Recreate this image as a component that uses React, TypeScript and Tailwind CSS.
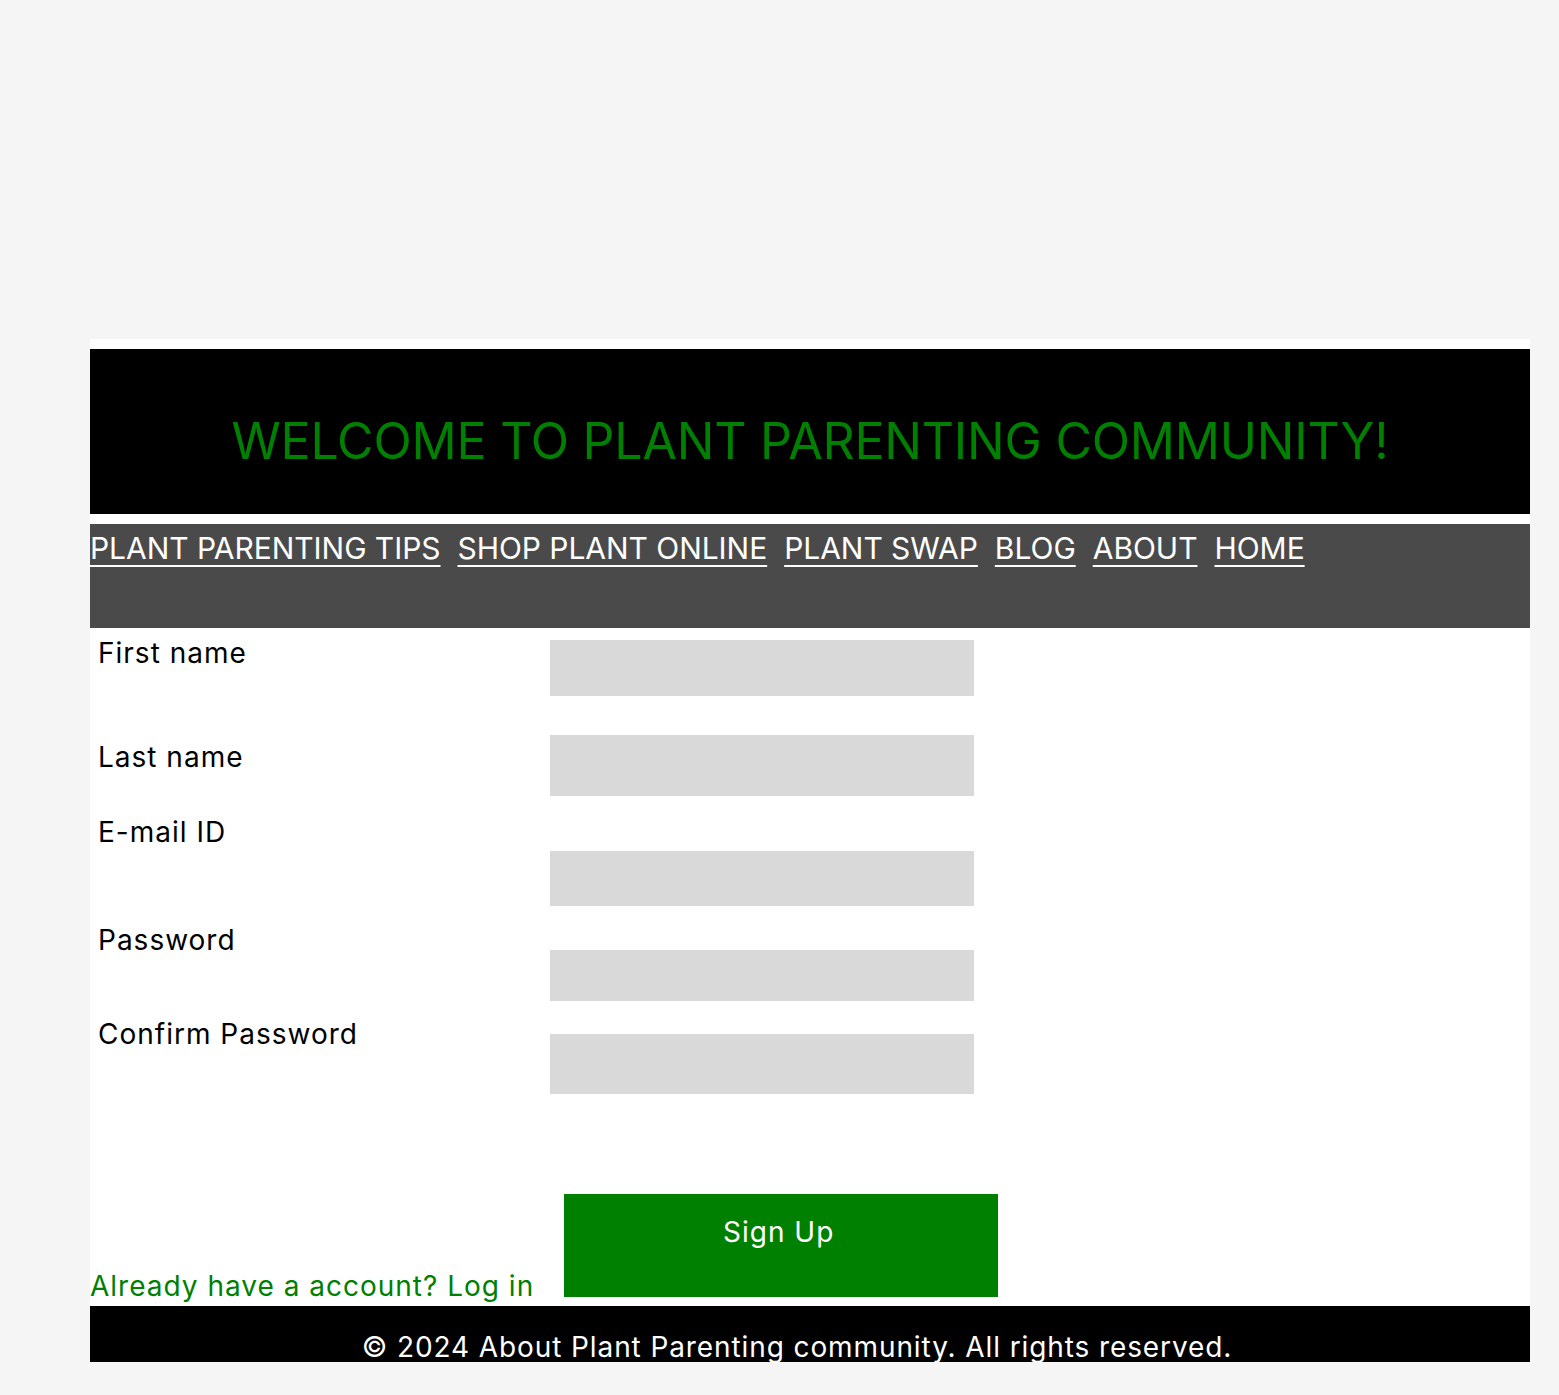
const navLinks = ['PLANT PARENTING TIPS', 'SHOP PLANT ONLINE', 'PLANT SWAP', 'BLOG', 'ABOUT', 'HOME'];

type Row = {
  label: string;
  type: string;
  rowClass: string;
  labelClass: string;
  inputClass: string;
};

const rows: Row[] = [
  { label: 'First name', type: 'text', rowClass: 'mt-[4px]', labelClass: 'mt-0', inputClass: 'mt-[8px] h-[56px]' },
  { label: 'Last name', type: 'text', rowClass: 'mt-[39px]', labelClass: 'mt-[1px]', inputClass: 'mt-0 h-[61px]' },
  { label: 'E-mail ID', type: 'email', rowClass: 'mt-[15px]', labelClass: 'mt-0', inputClass: 'mt-[40px] h-[55px]' },
  { label: 'Password', type: 'password', rowClass: 'mt-[13px]', labelClass: 'mt-0', inputClass: 'mt-[31px] h-[51px]' },
  { label: 'Confirm Password', type: 'password', rowClass: 'mt-[12px]', labelClass: 'mt-0', inputClass: 'mt-[21px] h-[60px]' },
];

function Header() {
  return (
    <header className="h-[165px] bg-black pt-[55px] text-center">
      <h1 className="text-[50px] font-normal leading-normal tracking-[-0.2px] text-[#008000]">
        WELCOME TO PLANT PARENTING COMMUNITY!
      </h1>
    </header>
  );
}

function Nav() {
  return (
    <nav className="mt-[10px] h-[104px] bg-[#4a4a4a] pt-[2px]">
      <ul className="flex gap-[17px]">
        {navLinks.map(link => (
          <li key={link}>
            <a
              href="#"
              className="text-[30px] leading-normal tracking-[-0.05px] text-white underline decoration-[1.5px] underline-offset-[6px]"
            >
              {link}
            </a>
          </li>
        ))}
      </ul>
    </nav>
  );
}

function SignUpForm() {
  return (
    <form onSubmit={e => e.preventDefault()}>
      {rows.map(row => (
        <div key={row.label} className={`flex items-start ${row.rowClass}`}>
          <label className={`w-[460px] pl-[8px] text-[28px] leading-normal tracking-[1px] text-black ${row.labelClass}`}>
            {row.label}
          </label>
          <input type={row.type} className={`w-[424px] bg-[#d9d9d9] outline-none ${row.inputClass}`} />
        </div>
      ))}

      <div className="mt-[100px] flex h-[112px] items-end">
        <a href="#" className="mb-[-1px] text-[28px] leading-normal tracking-[1px] text-[#008000]">
          Already have a account? Log in
        </a>
        <button
          type="submit"
          className="mb-[9px] ml-[30px] h-[103px] w-[434px] bg-[#008000] pt-[17px] pr-[5px] pb-[52px] text-[28px] leading-normal tracking-[1px] text-white"
        >
          Sign Up
        </button>
      </div>
    </form>
  );
}

export default function App() {
  return (
    <div className="min-h-[1395px] bg-[#f5f5f5] pt-[339px]" style={{ fontFamily: 'Inter, "Noto Sans", sans-serif' }}>
      <div className="ml-[90px] w-[1440px] bg-white pt-[10px]">
        <Header />
        <Nav />
        <SignUpForm />
        <footer className="h-[56px] overflow-hidden bg-black pt-[20px] pr-[26px] text-center text-[28px] leading-normal tracking-[0.9px] text-white">
          © 2024 About Plant Parenting community. All rights reserved.
        </footer>
      </div>
    </div>
  );
}
